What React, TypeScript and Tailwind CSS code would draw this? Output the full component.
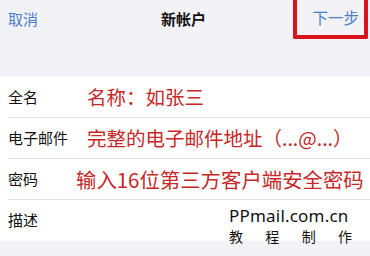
import React from "react";

type Row = {
  label: string;
  value?: string;
  valueClass?: string;
};

const rows: Row[] = [
  { label: "全名", value: "名称：如张三", valueClass: "pl-[49px] text-[19.5px]" },
  { label: "电子邮件", value: "完整的电子邮件地址（...@...）", valueClass: "pl-[19px] text-[19.5px]" },
  { label: "密码", value: "输入16位第三方客户端安全密码", valueClass: "pl-[38px] text-[20.4px]" },
  { label: "描述" },
];

export default function App() {
  return (
    <div
      className="relative w-[370px] h-[256px] overflow-hidden bg-[#f2f2f7]"
      style={{ fontFamily: '"Noto Sans CJK SC", "Noto Sans", sans-serif' }}
    >
      {/* nav bar */}
      <div className="h-[77px] flex items-start">
        <div className="flex-1 flex items-center h-[39px] pl-[8px] text-[15px] text-[#4a7fc8]">
          取消
        </div>
        <div className="h-[39px] flex items-center text-[15px] font-semibold text-[#111] mr-[87px]">
          新帐户
        </div>
        <div className="h-[39px] w-[75px] mr-[2px] border-x-4 border-b-4 border-[#d9141c] rounded-b-[2px] flex items-center justify-end pr-[5px] text-[15.5px] text-[#4a7fc8]">
          下一步
        </div>
      </div>

      {/* form rows */}
      <div className="bg-white">
        {rows.map((row, i) => (
          <div key={row.label} className="pl-[8px]">
            <div
              className={`h-[41px] flex items-center ${
                i < rows.length - 1 ? "border-b border-[#e4e4e8]" : ""
              }`}
            >
              <span className="text-[15px] text-[#111] shrink-0">{row.label}</span>
              {row.value && (
                <span className={`${row.valueClass} text-[#c62828] whitespace-nowrap leading-none`}>
                  {row.value}
                </span>
              )}
            </div>
          </div>
        ))}
      </div>

      {/* watermark */}
      <div className="absolute left-[229px] top-[207px] text-[#111]">
        <div
          className="text-[17px] leading-[18px] tracking-[0.2px]"
          style={{ fontFamily: '"Noto Sans", sans-serif' }}
        >
          PPmail.com.cn
        </div>
        <div className="flex justify-between w-[123px] text-[14px] leading-[14px] mt-[4px]">
          <span>教</span>
          <span>程</span>
          <span>制</span>
          <span>作</span>
        </div>
      </div>
    </div>
  );
}
